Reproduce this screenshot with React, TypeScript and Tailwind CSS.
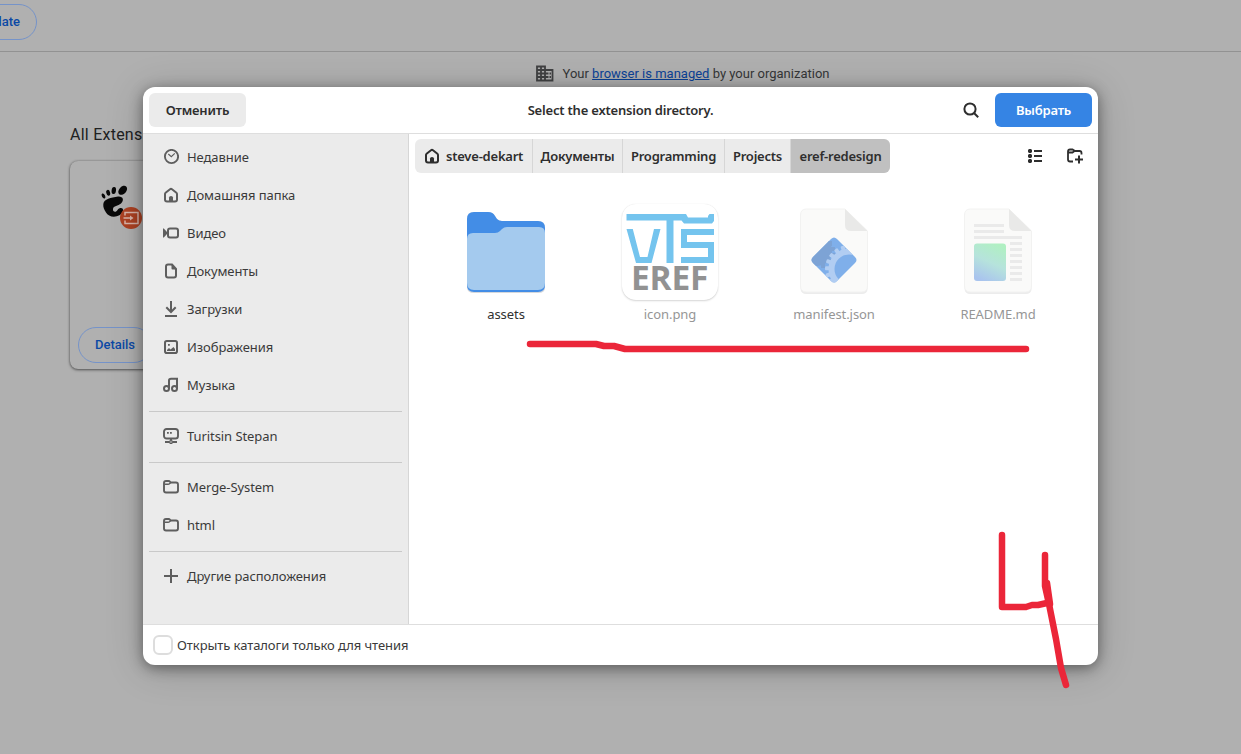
import type { ReactNode } from 'react';

function Icon({ children, className = 'text-[#5e5e5e]' }: { children: ReactNode; className?: string }) {
  return (
    <svg viewBox="0 0 16 16" width="16" height="16" fill="none" stroke="currentColor" strokeWidth="2" className={`shrink-0 ${className}`}>
      {children}
    </svg>
  );
}

const homeShape = (
  <>
    <path d="M2 7q0-.8.600-1.300L7 2.300q1-.8 2 0l4.400 3.400q.6.500.6 1.300V12.500q0 2-2 2H4q-2 0-2-2z" />
    <path d="M6 15v-4.500q0-1.500 2-1.500t2 1.500V15z" fill="currentColor" stroke="none" />
  </>
);

const folderShape = (
  <>
    <path d="M1 11.500V4q0-2 2-2h2.500q1 0 1.500.800.400.700 1.400.700H13q2 0 2 2v6q0 2-2 2H3q-2 0-2-2z" strokeWidth="1.900" />
    <path d="M1.500 5.200H5q1 0 1.800-.7L8 3.500" strokeWidth="1.400" />
  </>
);

const places: { label: string; icon: ReactNode }[] = [
  {
    label: 'Недавние',
    icon: (
      <>
        <circle cx="8.500" cy="7.500" r="6.600" strokeWidth="1.900" />
        <path d="m5.300 5 3 2.600 3.500-3.200" strokeWidth="1.200" />
      </>
    ),
  },
  { label: 'Домашняя папка', icon: homeShape },
  {
    label: 'Видео',
    icon: (
      <>
        <rect x="5" y="3.500" width="10" height="9" rx="2" />
        <path d="M0 3.500h.8L4 7.100v1.800L.8 12.500H0z" fill="currentColor" stroke="none" />
      </>
    ),
  },
  {
    label: 'Документы',
    icon: (
      <>
        <path d="M3 12.500v-9q0-2 2-2h4L13 6v6.500q0 2-2 2H5q-2 0-2-2z" />
        <path d="M8.500 1.500V5.500q0 1 1 1H13z" fill="currentColor" stroke="none" />
      </>
    ),
  },
  { label: 'Загрузки', icon: <path d="M8 0v11M3.300 6.300 8 11l4.700-4.700M2 15h12" /> },
  {
    label: 'Изображения',
    icon: (
      <>
        <rect x="2" y="2" width="12" height="12" rx="1.800" />
        <path d="M4 12v-1l2-2 1.500 1.500L10.500 8 12 10v2zM5 5h1.800v1.800H5z" fill="currentColor" stroke="none" />
      </>
    ),
  },
  {
    label: 'Музыка',
    icon: (
      <>
        <circle cx="3.500" cy="11.500" r="2.500" />
        <circle cx="11.500" cy="11.500" r="2.500" />
        <path d="M6 11.500V3.500q0-1.700 2-1.700h6v9.700" />
      </>
    ),
  },
];

const devices = [
  {
    label: 'Turitsin Stepan',
    icon: (
      <>
        <rect x="1" y="1" width="14" height="9.500" rx="2.600" strokeWidth="1.900" />
        <path d="M4 4h1.800v1.800H4zM7 4h1.800v1.800H7z" fill="currentColor" stroke="none" />
        <path d="M8 10.500v2M2 14h4M10 14h4" />
        <circle cx="8" cy="14" r="1.400" strokeWidth="1.400" />
      </>
    ),
  },
];

const bookmarks = [
  { label: 'Merge-System', icon: folderShape },
  { label: 'html', icon: folderShape },
];

const other = [{ label: 'Другие расположения', icon: <path d="M8 1v14M1 8h14" /> }];

function PlaceList({ items }: { items: { label: string; icon: ReactNode }[] }) {
  return (
    <ul>
      {items.map((item) => (
        <li key={item.label} className="flex h-[38px] items-center gap-2 pl-5 whitespace-nowrap">
          <Icon>{item.icon}</Icon>
          <span className="pt-[2px]">{item.label}</span>
        </li>
      ))}
    </ul>
  );
}

function Divider() {
  return <div className="mx-1.5 mt-[7px] mb-[5px] h-px bg-[#c9c9c9]" />;
}

function FolderArt() {
  return (
    <svg width="96" height="96" viewBox="0 0 96 96">
      <path d="M9 83V15q0-7 7-7h14q5 0 7 4l2 3q2 2 5 2h36q7 0 7 7v60q0 5-7 5H16q-7 0-7-6z" fill="#d5d8dc" />
      <path d="M9 81V15q0-7 7-7h14q5 0 7 4l2 3q2 2 5 2h36q7 0 7 7v57q0 7-7 7H16q-7 0-7-7z" fill="#438de6" />
      <path d="M9 79V35q0-6 6-6h22q3 0 5-2l2-2q2-2 5-2h32q6 0 6 6v50q0 7-7 7H16q-7 0-7-7z" fill="#a4caee" />
    </svg>
  );
}

function LogoArt() {
  return (
    <div className="relative h-24 w-24 rounded-[14px] bg-white shadow-[0_1px_2px_rgba(0,0,0,0.16),0_0_1px_rgba(0,0,0,0.1)]">
      <svg width="96" height="96" viewBox="0 0 96 96">
        <g fill="#74c4ee">
          <path d="M4.500 10H64l2 3.500H86V12l1.500-2H92v7l-2 2.500H62L59.500 16.500H51.500V59H44.500V16.500H4.500z" />
          <path d="M4.500 25h6.300L18 53h7.500L32 25h6.500L29.500 59H14z" />
          <path d="M59 25H92v6H65v7H92v21H59v-6H86v-9H59z" />
        </g>
      </svg>
      <span className="absolute top-[53px] left-[9px] font-['Open_Sans',sans-serif] text-[33.500px] leading-[40px] font-bold tracking-[-0.200px] text-[#929292]">EREF</span>
    </div>
  );
}

function Sheet({ children }: { children: ReactNode }) {
  return (
    <svg width="96" height="96" viewBox="0 0 96 96">
      <path d="M14.500 84V12q0-6 6-6H59L81.500 28v57q0 5-6 5h-55q-6 0-6-6z" fill="#ececec" />
      <path d="M14.500 82V11q0-6 6-6H59L81.500 27v55q0 6-6 6h-55q-6 0-6-6z" fill="#fafaf9" stroke="#f2f2f1" strokeWidth="1" />
      <path d="M59 5 81.500 27H65q-6 0-6-6z" fill="#e9e9e8" />
      {children}
    </svg>
  );
}

const teeth = [-178, -160, -142, -124, -106, -88, -70, 164, 146, 128, 110, 92];

function ManifestArt() {
  return (
    <Sheet>
      <defs>
        <clipPath id="diamond">
          <path d="M45 35q3-3 6 0L69 53q3 3 0 6L51 77q-3 3-6 0L27 59q-3-3 0-6z" />
        </clipPath>
      </defs>
      <g clipPath="url(#diamond)">
        <path d="M20 30h56v54H20z" fill="#7fafea" />
        <g fill="#7da3d5">
          <circle cx="31" cy="47" r="15" />
          <path d="M42 37h4v5h-4zM44 43h5v4h-5zM44 49h5v4h-5zM40 55h5v4h-5zM35 59h4v5h-4z" />
        </g>
        <circle cx="63" cy="65" r="17.500" fill="none" stroke="#b1cdf2" strokeWidth="6" />
        <g fill="#b1cdf2">
          {teeth.map((a) => (
            <rect key={a} x="82" y="63" width="5" height="4" rx="1" transform={`rotate(${a} 63 65)`} />
          ))}
        </g>
      </g>
    </Sheet>
  );
}

function ReadmeArt() {
  return (
    <Sheet>
      <defs>
        <linearGradient id="thumb" x1="0.300" y1="1" x2="0.700" y2="0">
          <stop offset="0" stopColor="#a9c4ee" />
          <stop offset="0.500" stopColor="#b6e3dc" />
          <stop offset="1" stopColor="#b0f0c2" />
        </linearGradient>
      </defs>
      <path d="M24 21.500H54M24 27.500H54M24 33.500H72M60 39.500H72M60 45.500H72M60 51.500H72M60 57.500H72M60 63.500H72M60 69.500H72M60 75.500H72" stroke="#eaeaea" strokeWidth="3" />
      <rect x="24" y="39.500" width="32" height="37.500" rx="3" fill="url(#thumb)" />
    </Sheet>
  );
}

const files = [
  { name: 'assets', art: <FolderArt />, color: 'text-[#303030]' },
  { name: 'icon.png', art: <LogoArt />, color: 'text-[#969696]' },
  { name: 'manifest.json', art: <ManifestArt />, color: 'text-[#969696]' },
  { name: 'README.md', art: <ReadmeArt />, color: 'text-[#969696]' },
];

const crumbs = [
  { label: 'Документы', width: 'w-[90px]' },
  { label: 'Programming', width: 'w-[102px]' },
  { label: 'Projects', width: 'w-[66px]' },
];

function BackgroundPage() {
  return (
    <div className="h-full font-[Roboto,sans-serif]">
      <div className="h-[52px] border-b border-[#929292] pt-1">
        <div className="-ml-12 flex h-9 w-[85px] items-center justify-end rounded-full border border-[#7593c9] pr-4 text-[13px] font-medium text-[#0b49a5]">Update</div>
      </div>
      <div className="flex h-11 items-center pl-[536px] text-[13px] text-[#353637]">
        <svg width="18" height="18" viewBox="0 0 18 18" fill="none" stroke="#404142" strokeWidth="1.800" className="mr-[8.500px]">
          <path d="M1 1.500h8v14H1zM5 1.500v14M1 5h8M1 8.500h8M1 12h8M9 5h7.500v10.500H9M9.500 8.500h3M9.500 12h3M13.500 8.500h1.500M13.500 12h1.500" />
        </svg>
        <span>Your <a className="text-[#0b4297] underline">browser is managed</a> by your organization</span>
      </div>
      <h2 className="mt-[27px] ml-[70px] text-[16px] leading-[24px] tracking-[0.240px] text-[#202122]">All Extensions</h2>
      <div className="mt-[14px] ml-[70px] flex h-[208px] w-[400px] flex-col justify-between rounded-lg pt-6 pb-1.5 pl-2 shadow-[0_1px_3px_rgba(0,0,0,0.5),0_0_2px_rgba(0,0,0,0.25)]">
        <svg width="52" height="48" viewBox="0 0 52 48" className="ml-[20px]">
          <g fill="#080808">
            <ellipse cx="24.700" cy="5.300" rx="5.200" ry="3.600" transform="rotate(-48 24.700 5.300)" />
            <ellipse cx="15.800" cy="5.500" rx="2.200" ry="3.500" transform="rotate(8 15.800 5.500)" />
            <ellipse cx="10.200" cy="7.800" rx="1.900" ry="3" transform="rotate(-15 10.200 7.800)" />
            <ellipse cx="5.500" cy="11" rx="1.600" ry="2.700" transform="rotate(-28 5.500 11)" />
            <path d="M5.300 19C6 14 13 12.500 20 11.500C25 11 26.500 15 23 18.500C20 21 15.500 20.500 15 24C14.500 27 18 28 19.500 25C21.500 22 26 22.500 25 26C22.500 33 11 33.500 8 27.500C6 24.500 5 22 5.300 19Z" />
          </g>
          <circle cx="33" cy="33" r="11" fill="#ad4223" />
          <g fill="none" stroke="#d9b4a9" strokeWidth="1.500">
            <path d="M27 30.500v-3h13v11H27v-3M25.500 33h8" />
            <path d="m32 30.500 3.500 2.500-3.500 2.500z" fill="#d9b4a9" stroke="none" />
          </g>
        </svg>
        <div className="flex h-9 w-[74px] items-center justify-center rounded-full border border-[#7593c9] text-[13px] font-medium text-[#0b49a5]">Details</div>
      </div>
    </div>
  );
}

function FileChooser() {
  return (
    <section className="absolute top-[87px] left-[143px] flex h-[578px] w-[955px] flex-col overflow-hidden rounded-xl bg-white font-['Noto_Sans',sans-serif] text-[13px] tracking-[-0.070px] text-[#3a3a3a] shadow-[0_3px_14px_rgba(0,0,0,0.42),0_4px_38px_rgba(0,0,0,0.18)]">
      <header className="flex h-[47px] shrink-0 items-center border-b border-[#dedede] px-1.5 font-semibold tracking-[-0.200px] text-[#2e2e2e]">
        <button className="h-[34px] w-[97px] rounded-md bg-[#ebebeb] pt-[2px]">Отменить</button>
        <h1 className="flex-1 pt-[2px] pl-[32px] text-center">Select the extension directory.</h1>
        <Icon className="mr-4 text-[#2e2e2e]">
          <circle cx="7" cy="7" r="5.600" />
          <path d="m11 11 4.200 4.200" />
        </Icon>
        <button className="h-[34px] w-[97px] rounded-md bg-[#3584e4] pt-[2px] text-white">Выбрать</button>
      </header>
      <div className="flex min-h-0 flex-1">
        <nav className="w-[266px] shrink-0 border-r border-[#d6d6d6] bg-[#ebebeb] pt-1">
          <PlaceList items={places} />
          <Divider />
          <PlaceList items={devices} />
          <Divider />
          <PlaceList items={bookmarks} />
          <Divider />
          <PlaceList items={other} />
        </nav>
        <div className="flex-1">
          <div className="flex h-[44px] items-center px-1.5 font-semibold tracking-[-0.220px] text-[#2e2e2e]">
            <div className="flex h-[34px] overflow-hidden rounded-md bg-[#ebebeb]">
              <div className="flex w-[118px] items-center gap-1.5 border-r border-[#d6d6d6] pl-[9px] whitespace-nowrap">
                <Icon className="text-[#2e2e2e]">{homeShape}</Icon>
                <span className="pt-[2px]">steve-dekart</span>
              </div>
              {crumbs.map((crumb) => (
                <div key={crumb.label} className={`flex items-center justify-center border-r border-[#d6d6d6] pt-[2px] whitespace-nowrap ${crumb.width}`}>{crumb.label}</div>
              ))}
              <div className="flex w-[99px] items-center justify-center bg-[#c0c0c0] pt-[2px] whitespace-nowrap">eref-redesign</div>
            </div>
            <Icon className="ml-[137px] text-[#2e2e2e]">
              <path d="M7 3h8M7 8h8M7 13h8" />
              <path d="M2 1h2l1 1v2L4 5H2L1 4V2zM2 6h2l1 1v2l-1 1H2L1 9V7zM2 11h2l1 1v2l-1 1H2l-1-1v-2z" fill="currentColor" stroke="none" />
            </Icon>
            <Icon className="ml-[24px] text-[#2e2e2e]">
              <path d="M6 13.500H3q-2 0-2-2V3.500q0-2 2-2h2.500L8 3h4.500q2 0 2 2v1.500M1.500 4.500h4L7.500 3" strokeWidth="1.800" />
              <path d="M12 7.500v8M8 11.500h8" />
            </Icon>
          </div>
          <div className="mt-[26px] ml-[15px] flex">
            {files.map((file) => (
              <figure key={file.name} className={`flex w-[164px] flex-col items-center ${file.color}`}>
                {file.art}
                <figcaption className="mt-[5px] leading-[18px]">{file.name}</figcaption>
              </figure>
            ))}
          </div>
        </div>
      </div>
      <footer className="flex h-[41px] shrink-0 items-center gap-1 border-t border-[#dedede] pl-2.5">
        <span className="h-5 w-5 rounded-md border-2 border-[#dddddd]" />
        <span className="pt-[2px]">Открыть каталоги только для чтения</span>
      </footer>
    </section>
  );
}

export default function App() {
  return (
    <main className="relative h-[754px] w-[1241px] overflow-hidden bg-[#b0b0b0]">
      <BackgroundPage />
      <FileChooser />
      <svg className="pointer-events-none absolute inset-0" width="1241" height="754" viewBox="0 0 1241 754" fill="none" stroke="#eb2639" strokeWidth="6.500" strokeLinecap="round" strokeLinejoin="round">
        <path d="M530 344H596L604 346H614L625 349H1026" />
        <path d="M1002 535V607H1026L1032 605H1038L1047 603" />
        <path d="M1045 555V586L1049 604L1056 639L1061 668L1066 685" />
        <path d="M1047 583L1050 604" />
      </svg>
    </main>
  );
}
